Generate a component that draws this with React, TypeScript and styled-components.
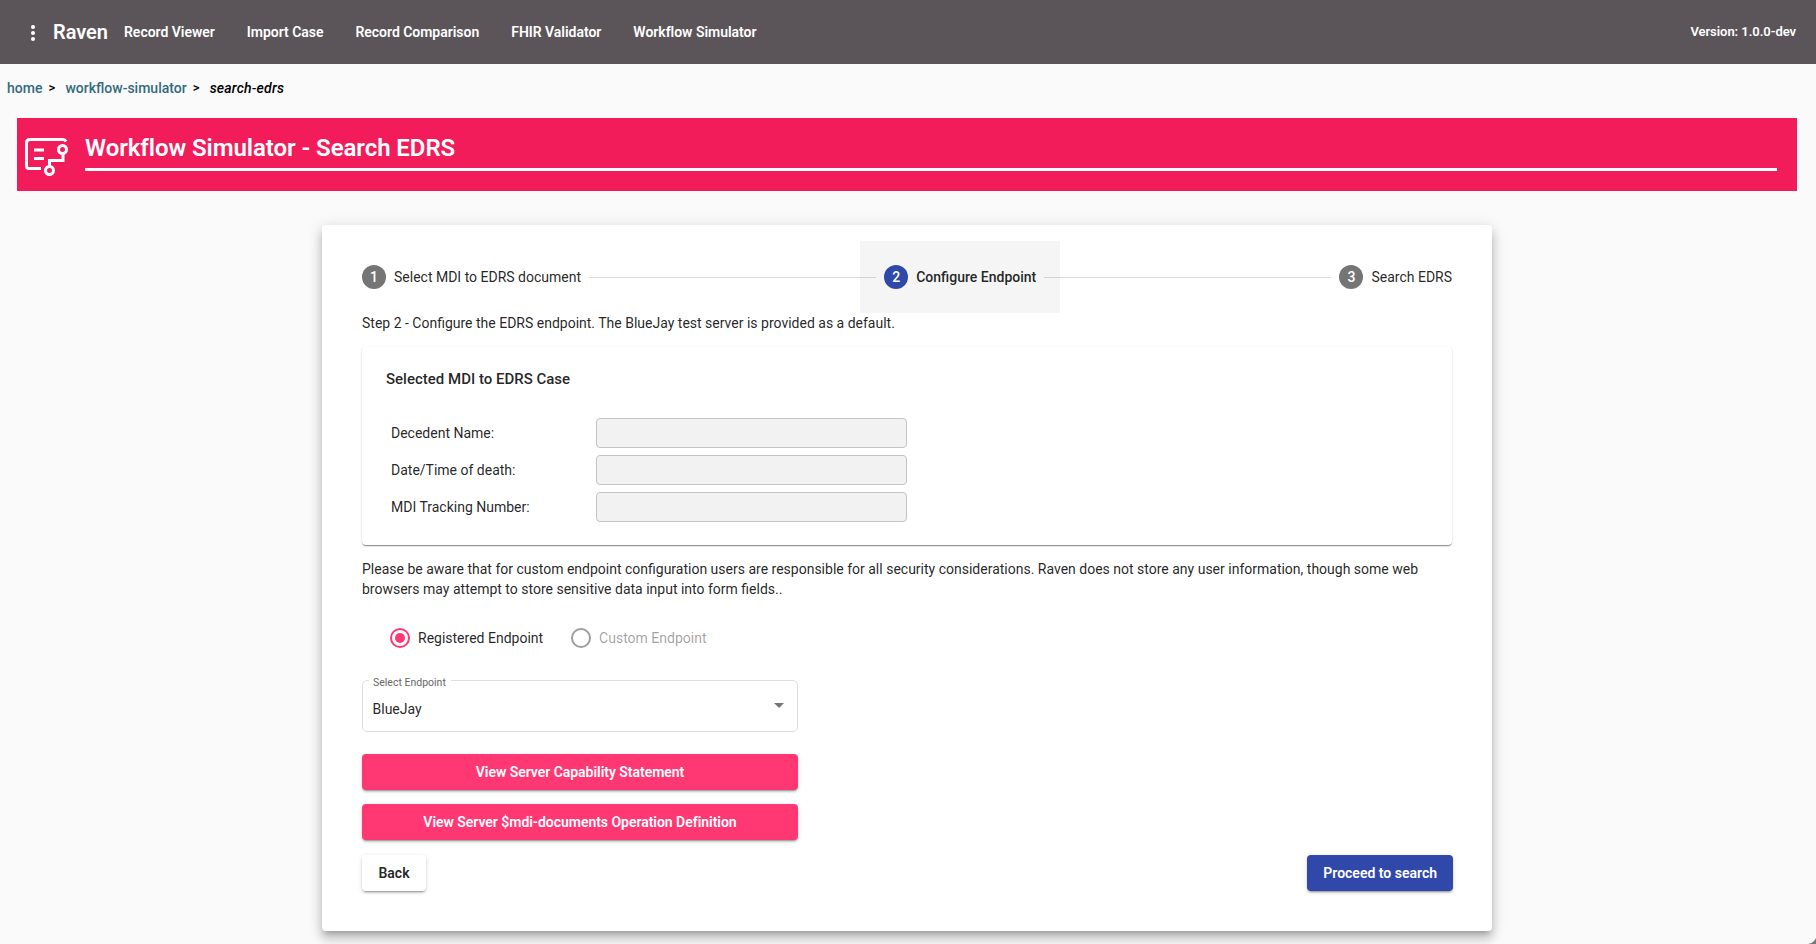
import React from "react";
import styled, { createGlobalStyle } from "styled-components";

const GlobalStyle = createGlobalStyle`
  * { box-sizing: border-box; }
  body {
    margin: 0;
    background: #fafafa;
    color: rgba(0, 0, 0, 0.87);
    font: 400 14px/20px Roboto, sans-serif;
    overflow: hidden;
  }
`;

const raised =
  "0 3px 1px -2px rgba(0,0,0,.2), 0 2px 2px 0 rgba(0,0,0,.14), 0 1px 5px 0 rgba(0,0,0,.12)";

const Page = styled.div`
  position: relative;
  height: 944px;
  overflow: hidden;
`;

const WindowCorner = styled.svg`
  position: absolute;
  right: 0;
  bottom: 0;
  width: 8px;
  height: 6px;
`;

const TopBar = styled.header`
  display: flex;
  align-items: center;
  height: 64px;
  padding: 0 20px 0 24px;
  background: #5b5559;
  color: #fff;
`;

const MenuIcon = styled.svg`
  width: 18px;
  height: 24px;
  margin-top: 2px;
`;

const Brand = styled.span`
  width: 71px;
  padding-left: 11px;
  font-size: 20px;
  font-weight: 600;
  letter-spacing: -0.08px;
`;

const NavLinks = styled.nav`
  display: flex;
  flex: 1;
  gap: 32px;
  padding-left: 11px;
`;

const NavLink = styled.a`
  font-weight: 600;
  letter-spacing: -0.025px;
  white-space: nowrap;
`;

const Version = styled.span`
  font-size: 13px;
  font-weight: 600;
  letter-spacing: -0.05px;
`;

const Breadcrumbs = styled.div`
  display: flex;
  height: 54px;
  padding: 14px 0 0 7px;
  color: #000;
  font-weight: 500;
`;

const Crumb = styled.a`
  color: #336b7e;
`;

const CrumbArrow = styled.span`
  width: 23px;
  padding-left: 6px;
  font-size: 13px;
`;

const CurrentCrumb = styled.em`
  color: #000;
  letter-spacing: 0.2px;
`;

const Banner = styled.section`
  display: flex;
  height: 73px;
  margin: 0 19px 0 17px;
  padding: 17px 20px 0 7px;
  background: #f21c5b;
  color: #fff;
`;

const BannerIcon = styled.svg`
  width: 46px;
  height: 42px;
  flex: none;
`;

const BannerTitle = styled.h1`
  flex: 1;
  height: 36px;
  margin: 0 0 0 15px;
  padding-top: 1px;
  border-bottom: 3px solid #fff;
  font-size: 24px;
  font-weight: 600;
  line-height: 24px;
  letter-spacing: -0.07px;
`;

const MainCard = styled.main`
  width: 1170px;
  height: 706px;
  margin: 34px auto 0 322px;
  padding: 16px;
  border-radius: 4px;
  background: #fff;
  box-shadow: 0 5px 5px -3px rgba(0,0,0,.2), 0 8px 10px 1px rgba(0,0,0,.14),
    0 3px 14px 2px rgba(0,0,0,.12);
`;

const Stepper = styled.div`
  display: flex;
  align-items: center;
`;

const StepHeader = styled.div<{ $active?: boolean }>`
  display: flex;
  align-items: center;
  gap: 8px;
  height: 72px;
  padding: 0 24px;
  background: ${(p) => (p.$active ? "#f5f5f5" : "transparent")};
  font-weight: ${(p) => (p.$active ? 500 : 400)};
  white-space: nowrap;
`;

const StepNumber = styled.span<{ $active?: boolean }>`
  display: grid;
  place-items: center;
  width: 24px;
  height: 24px;
  border-radius: 50%;
  background: ${(p) => (p.$active ? "#3048a9" : "#757575")};
  color: #fff;
  font-weight: 500;
`;

const StepLine = styled.div`
  z-index: 1;
  flex: 1;
  margin: 0 -16px;
  border-top: 1px solid rgba(0, 0, 0, 0.14);
`;

const StepBody = styled.div`
  padding: 0 24px;
`;

const Paragraph = styled.p`
  margin: 0;
`;

const CaseCard = styled.section`
  height: 198px;
  margin: 14px 0;
  padding: 22px 24px;
  border-radius: 4px;
  box-shadow: 0 2px 1px -1px rgba(0,0,0,.25), 0 1px 1px 0 rgba(0,0,0,.2),
    0 1px 3px 0 rgba(0,0,0,.12);
`;

const CaseTitle = styled.h2`
  margin: 0 0 29px;
  font-size: 15px;
  font-weight: 500;
  line-height: 20px;
`;

const FieldGrid = styled.div`
  display: grid;
  grid-template-columns: 205px 311px;
  row-gap: 7px;
  align-items: center;
  padding-left: 5px;
`;

const ReadOnlyInput = styled.input`
  height: 30px;
  border: 1px solid #c4c4c4;
  border-radius: 4px;
  background: #f2f2f2;
`;

const RadioGroup = styled.div`
  display: flex;
  gap: 28px;
  padding: 28px 0 0 28px;
`;

const RadioOption = styled.label<{ $disabled?: boolean }>`
  display: flex;
  align-items: center;
  gap: 8px;
  height: 22px;
  color: ${(p) => (p.$disabled ? "rgba(0,0,0,.38)" : "rgba(0,0,0,.87)")};
`;

const RadioMark = styled.span<{ $checked?: boolean }>`
  display: grid;
  place-items: center;
  width: 20px;
  height: 20px;
  border: 2px solid ${(p) => (p.$checked ? "#ff3874" : "#9e9e9e")};
  border-radius: 50%;

  &::after {
    content: "";
    width: 10px;
    height: 10px;
    border-radius: 50%;
    background: ${(p) => (p.$checked ? "#ff3874" : "transparent")};
  }
`;

const Controls = styled.div`
  display: flex;
  flex-direction: column;
  gap: 14px;
  width: 436px;
`;

const SelectBox = styled.fieldset`
  height: 57px;
  min-width: 0;
  margin: 26px 0 8px;
  padding: 0 13px 0 9.5px;
  border: 1px solid #dedede;
  border-radius: 5px;
`;

const SelectLabel = styled.legend`
  height: 10px;
  margin-left: -3.5px;
  padding: 0 5px 0 4px;
  color: #666;
  font-size: 10.5px;
  line-height: 16px;
`;

const SelectValue = styled.div`
  display: flex;
  align-items: center;
  justify-content: space-between;
  padding-top: 14px;
`;

const SelectArrow = styled.svg`
  width: 10px;
  height: 5px;
  margin-bottom: 8px;
`;

const Button = styled.button<{ $tone?: "pink" | "blue" }>`
  height: 36px;
  min-width: 64px;
  padding: 0 16px;
  border: 0;
  border-radius: 4px;
  background: ${(p) =>
    p.$tone === "pink" ? "#ff3874" : p.$tone === "blue" ? "#3048a9" : "#fff"};
  color: ${(p) => (p.$tone ? "#fff" : "rgba(0,0,0,.87)")};
  box-shadow: ${raised};
  font: 600 14px/36px Roboto, sans-serif;
  letter-spacing: ${(p) => (p.$tone === "pink" ? "-0.03px" : "0")};
`;

const Actions = styled.div`
  display: flex;
  justify-content: space-between;
  margin: 15px -1px 0 0;
`;

const navItems = [
  "Record Viewer",
  "Import Case",
  "Record Comparison",
  "FHIR Validator",
  "Workflow Simulator",
];

const caseFields = ["Decedent Name:", "Date/Time of death:", "MDI Tracking Number:"];

export default function App() {
  return (
    <Page>
      <GlobalStyle />
      <TopBar>
        <MenuIcon viewBox="0 0 18 24" fill="#fff">
          <circle cx="9" cy="6" r="2" />
          <circle cx="9" cy="12" r="2" />
          <circle cx="9" cy="18" r="2" />
        </MenuIcon>
        <Brand>Raven</Brand>
        <NavLinks>
          {navItems.map((item) => (
            <NavLink key={item}>{item}</NavLink>
          ))}
        </NavLinks>
        <Version>Version: 1.0.0-dev</Version>
      </TopBar>

      <Breadcrumbs>
        <Crumb>home</Crumb>
        <CrumbArrow>&gt;</CrumbArrow>
        <Crumb>workflow-simulator</Crumb>
        <CrumbArrow>&gt;</CrumbArrow>
        <CurrentCrumb>search-edrs</CurrentCrumb>
      </Breadcrumbs>

      <Banner>
        <BannerIcon viewBox="0 0 46 42" fill="none" stroke="#fff" strokeWidth="3">
          <path d="M42 6.500Q41 4.500 39 4.500H6Q2.500 4.500 2.500 8V31Q2.500 33.500 5 33.500H17" />
          <path d="M10 15H20M10 23.500H20" />
          <circle cx="38.500" cy="14.500" r="4" />
          <circle cx="25.500" cy="35.500" r="4" />
          <path d="M39 19V25.500H25.500V31" />
        </BannerIcon>
        <BannerTitle>Workflow Simulator - Search EDRS</BannerTitle>
      </Banner>

      <MainCard>
        <Stepper>
          <StepHeader>
            <StepNumber>1</StepNumber>Select MDI to EDRS document
          </StepHeader>
          <StepLine />
          <StepHeader $active>
            <StepNumber $active>2</StepNumber>Configure Endpoint
          </StepHeader>
          <StepLine />
          <StepHeader>
            <StepNumber>3</StepNumber>Search EDRS
          </StepHeader>
        </Stepper>

        <StepBody>
          <Paragraph>
            Step 2 - Configure the EDRS endpoint. The BlueJay test server is provided as a default.
          </Paragraph>

          <CaseCard>
            <CaseTitle>Selected MDI to EDRS Case</CaseTitle>
            <FieldGrid>
              {caseFields.map((field) => (
                <React.Fragment key={field}>
                  <span>{field}</span>
                  <ReadOnlyInput disabled aria-label={field} />
                </React.Fragment>
              ))}
            </FieldGrid>
          </CaseCard>

          <Paragraph>
            Please be aware that for custom endpoint configuration users are responsible for all
            security considerations. Raven does not store any user information, though some web
            browsers may attempt to store sensitive data input into form fields..
          </Paragraph>

          <RadioGroup>
            <RadioOption>
              <RadioMark $checked />
              Registered Endpoint
            </RadioOption>
            <RadioOption $disabled>
              <RadioMark />
              Custom Endpoint
            </RadioOption>
          </RadioGroup>

          <Controls>
            <SelectBox>
              <SelectLabel>Select Endpoint</SelectLabel>
              <SelectValue>
                BlueJay
                <SelectArrow viewBox="0 0 10 5" fill="#757575">
                  <path d="M0 0H10L5 5Z" />
                </SelectArrow>
              </SelectValue>
            </SelectBox>
            <Button $tone="pink">View Server Capability Statement</Button>
            <Button $tone="pink">View Server $mdi-documents Operation Definition</Button>
          </Controls>

          <Actions>
            <Button>Back</Button>
            <Button $tone="blue">Proceed to search</Button>
          </Actions>
        </StepBody>
      </MainCard>

      <WindowCorner viewBox="0 0 8 6" fill="#777">
        <path d="M8 0V6H0Q6 5 8 0Z" />
      </WindowCorner>
    </Page>
  );
}
